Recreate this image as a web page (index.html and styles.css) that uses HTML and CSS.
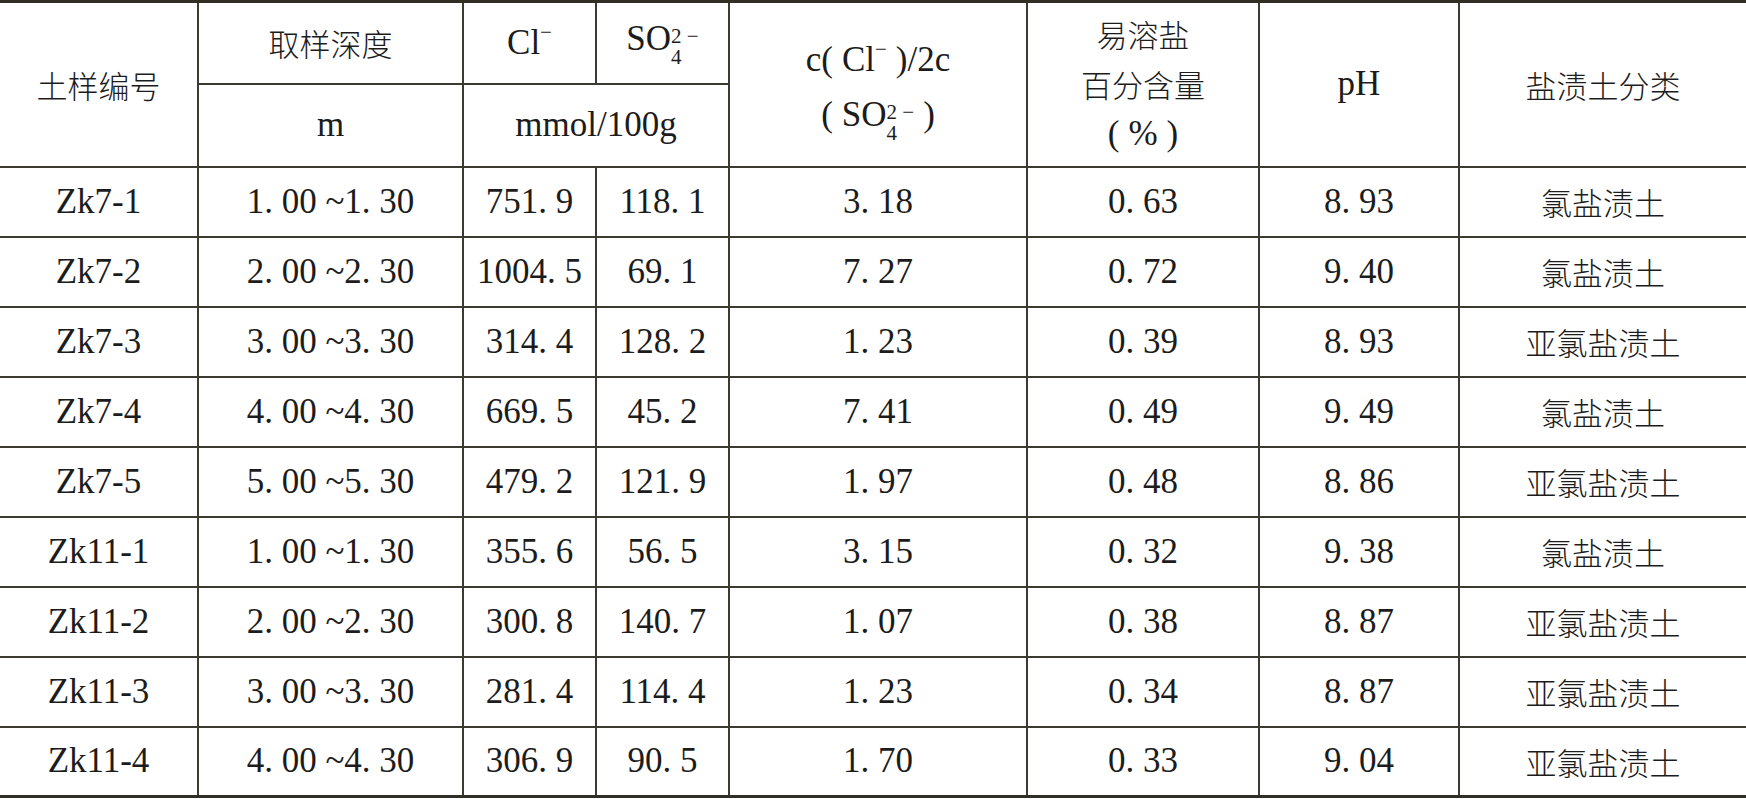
FILE: index.html
```html
<!DOCTYPE html>
<html lang="zh">
<head>
    <meta charset="UTF-8">
    <title>盐渍土分类</title>
    <link rel="stylesheet" href="styles.css">
</head>
<body>
    <table class="soil">
        <colgroup>
            <col style="width:198px">
            <col style="width:265px">
            <col style="width:133px">
            <col style="width:133px">
            <col style="width:298px">
            <col style="width:232px">
            <col style="width:200px">
            <col style="width:287px">
        </colgroup>
        <thead>
            <tr class="head-top">
                <th rowspan="2" class="cn">土样编号</th>
                <th class="cn">取样深度</th>
                <th>Cl<sup class="chg">−</sup></th>
                <th>SO<span class="stack"><span>2 −</span><span>4</span></span></th>
                <th rowspan="2" class="ratio">
                    <div>c<span class="lp">(</span>Cl<sup class="chg">−</sup><span class="rp">)</span>/2c</div>
                    <div><span class="lp">(</span>SO<span class="stack"><span>2 −</span><span>4</span></span><span class="rp">)</span></div>
                </th>
                <th rowspan="2" class="salt">
                    <div class="cn">易溶盐</div>
                    <div class="cn">百分含量</div>
                    <div><span class="lp">(</span>%<span class="rp">)</span></div>
                </th>
                <th rowspan="2">pH</th>
                <th rowspan="2" class="cn">盐渍土分类</th>
            </tr>
            <tr class="head-bottom">
                <th>m</th>
                <th colspan="2">mmol/100g</th>
            </tr>
        </thead>
        <tbody>
            <tr><td>Zk7-1</td><td>1. 00 ~1. 30</td><td>751. 9</td><td>118. 1</td><td>3. 18</td><td>0. 63</td><td>8. 93</td><td class="cn">氯盐渍土</td></tr>
            <tr><td>Zk7-2</td><td>2. 00 ~2. 30</td><td>1004. 5</td><td>69. 1</td><td>7. 27</td><td>0. 72</td><td>9. 40</td><td class="cn">氯盐渍土</td></tr>
            <tr><td>Zk7-3</td><td>3. 00 ~3. 30</td><td>314. 4</td><td>128. 2</td><td>1. 23</td><td>0. 39</td><td>8. 93</td><td class="cn">亚氯盐渍土</td></tr>
            <tr><td>Zk7-4</td><td>4. 00 ~4. 30</td><td>669. 5</td><td>45. 2</td><td>7. 41</td><td>0. 49</td><td>9. 49</td><td class="cn">氯盐渍土</td></tr>
            <tr><td>Zk7-5</td><td>5. 00 ~5. 30</td><td>479. 2</td><td>121. 9</td><td>1. 97</td><td>0. 48</td><td>8. 86</td><td class="cn">亚氯盐渍土</td></tr>
            <tr><td>Zk11-1</td><td>1. 00 ~1. 30</td><td>355. 6</td><td>56. 5</td><td>3. 15</td><td>0. 32</td><td>9. 38</td><td class="cn">氯盐渍土</td></tr>
            <tr><td>Zk11-2</td><td>2. 00 ~2. 30</td><td>300. 8</td><td>140. 7</td><td>1. 07</td><td>0. 38</td><td>8. 87</td><td class="cn">亚氯盐渍土</td></tr>
            <tr><td>Zk11-3</td><td>3. 00 ~3. 30</td><td>281. 4</td><td>114. 4</td><td>1. 23</td><td>0. 34</td><td>8. 87</td><td class="cn">亚氯盐渍土</td></tr>
            <tr><td>Zk11-4</td><td>4. 00 ~4. 30</td><td>306. 9</td><td>90. 5</td><td>1. 70</td><td>0. 33</td><td>9. 04</td><td class="cn">亚氯盐渍土</td></tr>
        </tbody>
    </table>
</body>
</html>
```

FILE: styles.css
```css
body {
    margin: 0;
    background: #fff;
    color: #1c1c1c;
    font-family: "Liberation Serif", "Times New Roman", serif;
}

/* Таблица */
.soil {
    width: 1746px;
    table-layout: fixed;
    border-collapse: collapse;
    border-top: 3px solid #2f2f26;
    border-bottom: 3px solid #2f2f26;
    font-size: 35px;
}

.soil th,
.soil td {
    border: 2px solid #3b3b32;
    padding: 0;
    text-align: center;
    vertical-align: middle;
    font-family: "Liberation Serif", "Times New Roman", serif;
    font-weight: normal;
    line-height: 1.2;
}

.soil tr > :first-child {
    border-left: none;
}

.soil tr > :last-child {
    border-right: none;
}

.soil .head-bottom > :first-child {
    border-left: 2px solid #3b3b32;
}

.head-top {
    height: 82px;
}

.head-bottom {
    height: 83px;
}

.soil tbody tr {
    height: 70px;
}

.soil .cn {
    font-family: "Noto Sans CJK SC", sans-serif;
    font-size: 31px;
    font-weight: 300;
}

.chg {
    font-size: 0.6em;
    vertical-align: 0.7em;
    line-height: 0;
}

.lp {
    margin-right: 9px;
}

.rp {
    margin-left: 9px;
}

/* Верхний и нижний индексы друг над другом */
.stack {
    display: inline-flex;
    flex-direction: column;
    font-size: 0.6em;
    line-height: 1;
    vertical-align: 0.32em;
    text-align: left;
    white-space: pre;
}

.ratio {
    padding-top: 8px !important;
}

.ratio div {
    line-height: 55px;
}

.salt div {
    line-height: 50px;
}
```
